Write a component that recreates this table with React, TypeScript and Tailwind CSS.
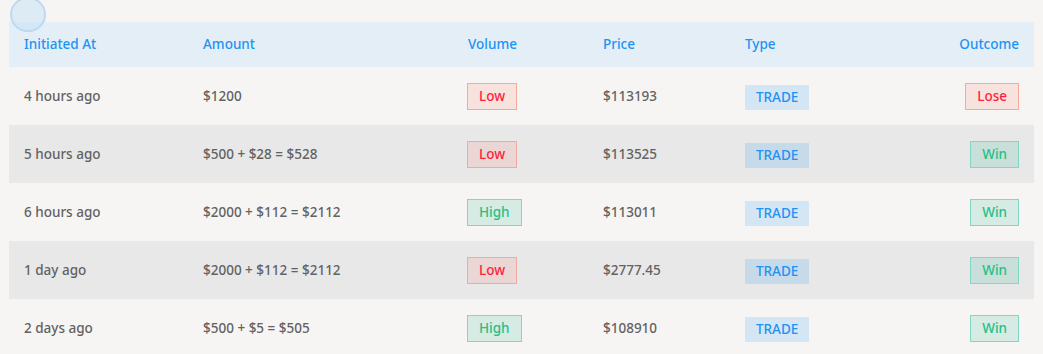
const rows = [
  { time: "4 hours ago", amount: "$1200", volume: "Low", price: "$113193", outcome: "Lose" },
  { time: "5 hours ago", amount: "$500 + $28 = $528", volume: "Low", price: "$113525", outcome: "Win" },
  { time: "6 hours ago", amount: "$2000 + $112 = $2112", volume: "High", price: "$113011", outcome: "Win" },
  { time: "1 day ago", amount: "$2000 + $112 = $2112", volume: "Low", price: "$2777.45", outcome: "Win" },
  { time: "2 days ago", amount: "$500 + $5 = $505", volume: "High", price: "$108910", outcome: "Win" },
];

const Badge = ({ good, label }: { good: boolean; label: string }) => (
  <span
    className={
      "inline-flex items-center h-[27px] px-[11px] border text-[13.5px] " +
      (good
        ? "border-[#7fd8c6] bg-[rgba(46,189,150,0.16)] text-[#27bf86]"
        : "border-[#f5a99e] bg-[rgba(255,90,70,0.12)] text-[#fd1f3c]")
    }
  >
    {label}
  </span>
);

export default function App() {
  return (
    <div
      className="relative min-h-[354px] bg-[#f7f5f3] pt-[22px] px-[9px] overflow-hidden"
      style={{ fontFamily: '"Noto Sans", sans-serif' }}
    >
      <div className="absolute left-[10px] top-[-3px] w-[36px] h-[35px] rounded-full bg-[rgba(200,225,245,0.55)] border-2 border-[rgba(185,215,242,0.9)]" />
      <table className="w-full table-fixed border-collapse text-[13.5px]">
        <colgroup>
          <col className="w-[179px]" />
          <col className="w-[265px]" />
          <col className="w-[135px]" />
          <col className="w-[142px]" />
          <col className="w-[150px]" />
          <col />
        </colgroup>
        <thead>
          <tr className="bg-[#e3eef6] h-[45px] text-[#1d93f3] text-left">
            <th className="px-[15px] font-medium">Initiated At</th>
            <th className="px-[15px] font-medium">Amount</th>
            <th className="px-[15px] font-medium">Volume</th>
            <th className="px-[15px] font-medium">Price</th>
            <th className="px-[15px] font-medium">Type</th>
            <th className="px-[15px] font-medium text-right">Outcome</th>
          </tr>
        </thead>
        <tbody className="text-[#626262] font-medium">
          {rows.map((r, i) => (
            <tr key={i} className={"h-[58px] " + (i % 2 === 1 ? "bg-[#e8e8e8]" : "bg-[#f7f5f3]")}>
              <td className="px-[15px]">{r.time}</td>
              <td className="px-[15px]">{r.amount}</td>
              <td className="px-[14px] pt-[1px]">
                <Badge good={r.volume === "High"} label={r.volume} />
              </td>
              <td className="px-[15px]">{r.price}</td>
              <td className="px-[15px] pt-[2px]">
                <span className="inline-flex items-center h-[25px] px-[11px] bg-[rgba(33,150,243,0.16)] text-[#1d93f3] text-[13.5px]">
                  TRADE
                </span>
              </td>
              <td className="px-[15px] pt-[1px] text-right">
                <Badge good={r.outcome === "Win"} label={r.outcome} />
              </td>
            </tr>
          ))}
        </tbody>
      </table>
    </div>
  );
}
